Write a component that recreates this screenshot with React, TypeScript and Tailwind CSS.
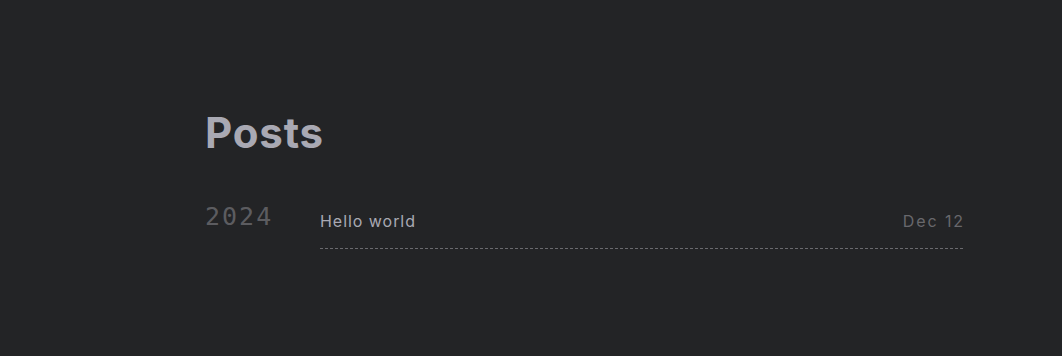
const posts = [{ year: '2024', items: [{ title: 'Hello world', date: 'Dec 12' }] }]

export default function App() {
  return (
    <div className="min-h-[356px] bg-[#232426] pt-[108px] font-['Inter',sans-serif]">
      <div className="ml-[205px] w-[758px]">
        <h1 className="text-[42px] font-bold leading-[50px] text-[#a9a9b3] tracking-[0.02em]">Posts</h1>
        {posts.map((g) => (
          <div key={g.year} className="mt-[44px] flex">
            <div className="w-[115px] shrink-0 font-['DejaVu_Sans_Mono',monospace] text-[25px] leading-[30px] tracking-[2px] text-[#5c5c60]">
              {g.year}
            </div>
            <div className="flex-1">
              {g.items.map((p) => (
                <div
                  key={p.title}
                  className="flex items-baseline justify-between border-b border-dashed border-[#6a6a6e] pt-[7px] pb-[15px]"
                >
                  <span className="text-[16px] tracking-[0.06em] text-[#a9a9b3]">{p.title}</span>
                  <span className="-mr-[2px] text-[16px] tracking-[0.12em] text-[#68686c]">{p.date}</span>
                </div>
              ))}
            </div>
          </div>
        ))}
      </div>
    </div>
  )
}
